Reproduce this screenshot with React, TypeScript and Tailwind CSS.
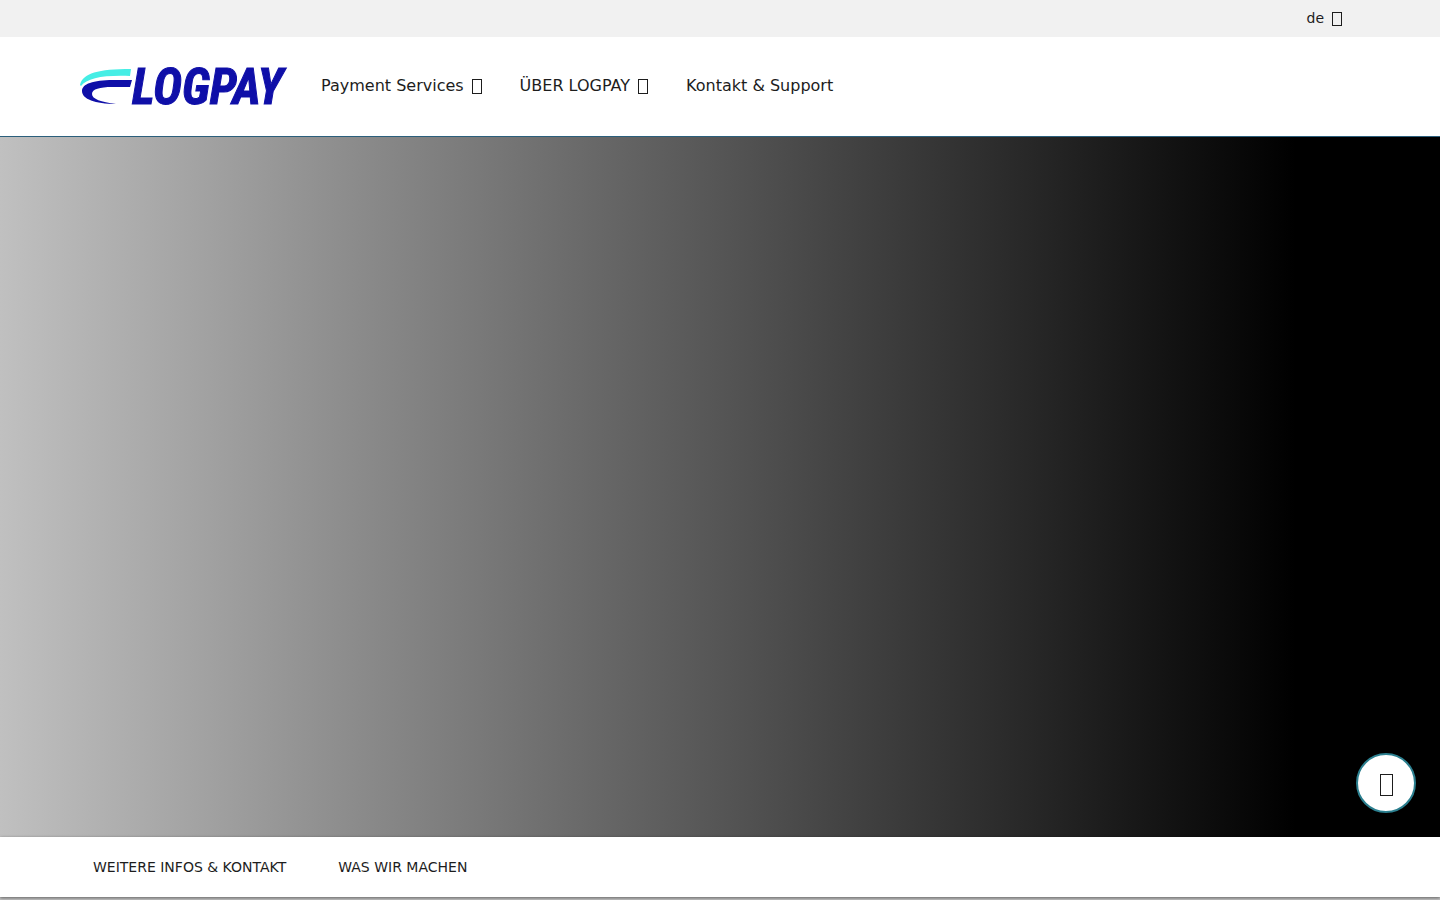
import clsx from 'clsx';

type NavItem = {
  label: string;
  hasMenu?: boolean;
};

const navItems: NavItem[] = [
  { label: 'Payment Services', hasMenu: true },
  { label: 'ÜBER LOGPAY', hasMenu: true },
  { label: 'Kontakt & Support' },
];

const anchors = ['WEITERE INFOS & KONTAKT', 'WAS WIR MACHEN'];

const BoxIcon = ({ className }: { className?: string }) => (
  <span aria-hidden="true" className={clsx('inline-block border border-current', className)} />
);

const Logo = () => (
  <svg width="210" height="60" viewBox="0 -10 210 60" role="img" aria-label="LOGPAY">
    <path d="M0 18C3 6 18 2 51 2L50 9C24 8 7 11 1 19Z" fill="#46eee5" />
    <path
      d="M52 13H33C13 13 2 17 2 24C2 32 15 37 36 37C21 35 12 32 12 27C12 22 20 20 32 20H50Z"
      fill="#0f0fa8"
    />
    <text
      x="52"
      y="37"
      fill="#0f0fa8"
      stroke="#0f0fa8"
      strokeWidth="1"
      className="font-['Roboto_Condensed',Roboto,sans-serif] text-[49px] font-bold italic"
    >
      LOGPAY
    </text>
  </svg>
);

const App = () => {
  return (
    <div className="flex min-h-screen flex-col bg-[#c3c3c3] font-['DejaVu_Sans',sans-serif] text-[#1d1d1d]">
      <div className="flex h-[37px] items-center justify-end bg-[#f1f1f1] px-[98px] pb-0.5 text-sm">
        <button type="button" aria-label="de" className="flex items-center gap-2">
          de
          <BoxIcon className="mt-0.5 h-[14px] w-[10px]" />
        </button>
      </div>

      <header className="flex h-[100px] items-center gap-[31px] border-b border-[#2b5f7c] bg-white px-20">
        <a href="#home" className="shrink-0">
          <Logo />
        </a>
        <nav className="flex items-center gap-[38px] pb-0.5">
          {navItems.map((item) =>
            item.hasMenu ? (
              <button key={item.label} type="button" className="flex items-center gap-2">
                {item.label}
                <BoxIcon className="mt-0.5 h-[15px] w-[10px]" />
              </button>
            ) : (
              <a key={item.label} href="#kontakt">
                {item.label}
              </a>
            ),
          )}
        </nav>
      </header>

      <main className="flex-1 bg-linear-to-r/srgb from-[#c0c0c0] to-black to-90%" />

      <nav className="mb-[3px] flex h-[60px] items-center gap-[52px] bg-white px-[93px] text-sm shadow-[0_1px_3px_rgba(0,0,0,0.5)]">
        {anchors.map((label) => (
          <a key={label} href="#section">
            {label}
          </a>
        ))}
      </nav>

      <button
        type="button"
        aria-label="Menü"
        className="fixed right-6 bottom-[87px] flex size-[60px] items-center justify-center rounded-full border-2 border-[#2b7f8f] bg-white"
      >
        <BoxIcon className="mt-1 h-[22px] w-[13px]" />
      </button>
    </div>
  );
};

export default App;
